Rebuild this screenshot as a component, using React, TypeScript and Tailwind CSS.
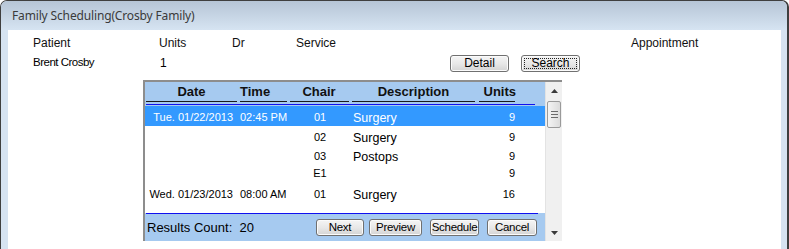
import React from "react";

type Row = { date?: string; time?: string; chair: string; desc?: string; units: string; selected?: boolean };

const ROWS: Row[] = [
  { date: "Tue. 01/22/2013", time: "02:45 PM", chair: "01", desc: "Surgery", units: "9", selected: true },
  { chair: "02", desc: "Surgery", units: "9" },
  { chair: "03", desc: "Postops", units: "9" },
  { chair: "E1", units: "9" },
  { date: "Wed. 01/23/2013", time: "08:00 AM", chair: "01", desc: "Surgery", units: "16" },
];

const SANS = "font-['Liberation_Sans',Arial,sans-serif]";

function WinButton({ label, width, focused, small }: { label: string; width: string; focused?: boolean; small?: boolean }) {
  return (
    <div
      className={`${width} h-[17px] relative flex items-center justify-center rounded-[3px] border border-[#707070] bg-gradient-to-b from-[#f5f5f5] via-[#e8e8e8] to-[#d4d4d4] shadow-[inset_0_0_0_1px_#fbfbfb] leading-none text-black ${SANS} ${
        small ? "text-[11.5px] tracking-[-0.3px]" : "text-[12px]"
      }`}
    >
      {focused && <span className="absolute inset-[2px] border border-dotted border-[#222]" />}
      <span className="relative">{label}</span>
    </div>
  );
}

function Scrollbar() {
  return (
    <div className="w-[17px] flex flex-col bg-[#f0f0f0] border-l border-[#e3e3e3]">
      <div className="h-[17px] flex items-center justify-center">
        <svg width="7" height="4" viewBox="0 0 7 4"><path d="M0 4 L3.5 0 L7 4 Z" fill="#3a3a3a" /></svg>
      </div>
      <div className="h-[2px]" />
      <div className="mx-[1px] h-[27px] rounded-[2px] border border-[#9a9a9a] bg-gradient-to-r from-[#f4f4f4] to-[#dcdcdc] flex flex-col items-center justify-center gap-[2px]">
        <div className="w-[7px] h-px bg-[#6a6a6a]" />
        <div className="w-[7px] h-px bg-[#6a6a6a]" />
        <div className="w-[7px] h-px bg-[#6a6a6a]" />
      </div>
      <div className="flex-1" />
      <div className="h-[17px] flex items-center justify-center">
        <svg width="7" height="4" viewBox="0 0 7 4"><path d="M0 0 L7 0 L3.5 4 Z" fill="#3a3a3a" /></svg>
      </div>
    </div>
  );
}

export default function App() {
  return (
    <div className="w-[789px] h-[249px] overflow-hidden bg-white">
      <div className="w-[789px] h-[262px] flex flex-col rounded-t-[7px] border border-r-2 border-[#3f3f3f] bg-[#d6e3f1]">
        {/* Title bar */}
        <div className="h-[29px] shrink-0 rounded-t-[6px] bg-gradient-to-b from-[#b6c5d6] to-[#d6e4f2] flex items-center pl-[11px] pt-[1px]">
          <span className="text-[12px] text-[#3a3a3a] font-['Segoe_UI','Noto_Sans',sans-serif] tracking-[-0.15px]">
            Family Scheduling(Crosby Family)
          </span>
        </div>

        {/* Client area */}
        <div className={`flex-1 ml-[7px] mr-[6px] bg-white flex flex-col ${SANS}`}>
          {/* Labels */}
          <div className="mt-[4px] h-[16px] pl-[25px] grid grid-cols-[126px_73px_64px_335px_auto] items-center text-[12px] text-[#111]">
            <span>Patient</span>
            <span>Units</span>
            <span>Dr</span>
            <span>Service</span>
            <span>Appointment</span>
          </div>

          {/* Patient row */}
          <div className="mt-[4px] h-[17px] pl-[25px] grid grid-cols-[126px_291px_59px_12px_59px] items-center text-[11.5px] text-black">
            <span className="tracking-[-0.5px]">Brent Crosby</span>
            <span className="pl-[1px] text-[12px]">1</span>
            <WinButton label="Detail" width="w-[59px]" />
            <span />
            <WinButton label="Search" width="w-[59px]" focused />
          </div>

          {/* Results panel */}
          <div className="mt-[9px] ml-[135px] w-[419px] h-[161px] flex border-l-2 border-t-2 border-[#8d8d8d]">
            <div className="w-[400px] flex flex-col">
              {/* Header */}
              <div className="h-[24px] bg-[#a6caf0] relative">
                <div className="h-[19px] grid grid-cols-[93px_50px_62px_127px_39px] items-center text-[13px] font-bold text-[#111]">
                  <span className="text-center">Date</span>
                  <span className="pl-[2px]">Time</span>
                  <span className="text-center">Chair</span>
                  <span className="text-center">Description</span>
                  <span className="text-right">Units</span>
                </div>
                <div className="grid grid-cols-[93px_50px_62px_127px_39px] h-px">
                  <div className="ml-[1px] mr-[1px] bg-[#1a1a1a]" />
                  <div className="ml-[2px] mr-[1px] bg-[#1a1a1a]" />
                  <div className="ml-[2px] mr-[1px] bg-[#1a1a1a]" />
                  <div className="ml-[2px] mr-[2px] bg-[#1a1a1a]" />
                  <div className="ml-[2px] mr-[1px] bg-[#1a1a1a]" />
                </div>
                <div className="mt-[2px] ml-[1px] w-[389px] h-px bg-[#1010f0]" />
              </div>

              {/* Rows */}
              <div className="h-[107px] bg-white">
                {ROWS.map((r, i) => (
                  <div
                    key={i}
                    className={`${i === 0 ? "h-[20px]" : "h-[19px]"} grid grid-cols-[93px_50px_62px_127px_39px] items-center text-[11px] ${
                      r.selected ? "bg-[#3399ff] text-white" : "text-black"
                    }`}
                  >
                    <span className="text-right pr-[5px] whitespace-nowrap">{r.date}</span>
                    <span className="pl-[2px] whitespace-nowrap">{r.time}</span>
                    <span className="text-center pl-[2px]">{r.chair}</span>
                    <span className="pl-[3px] pt-[3px] text-[12.5px]">{r.desc}</span>
                    <span className="text-right pr-[1px]">{r.units}</span>
                  </div>
                ))}
              </div>

              {/* Footer */}
              <div className="flex-1 bg-[#a6caf0] flex flex-col">
                <div className="ml-[1px] w-[392px] h-px bg-[#1010f0]" />
                <div className="flex-1 flex items-center">
                  <span className="w-[171px] pl-[2px] text-[13px] text-black whitespace-pre">Results Count:  20</span>
                  <WinButton label="Next" width="w-[48px]" small />
                  <div className="w-[5px]" />
                  <WinButton label="Preview" width="w-[53px]" small />
                  <div className="w-[8px]" />
                  <WinButton label="Schedule" width="w-[49px]" small />
                  <div className="w-[8px]" />
                  <WinButton label="Cancel" width="w-[50px]" small />
                </div>
              </div>
            </div>
            <Scrollbar />
          </div>
        </div>
      </div>
    </div>
  );
}
